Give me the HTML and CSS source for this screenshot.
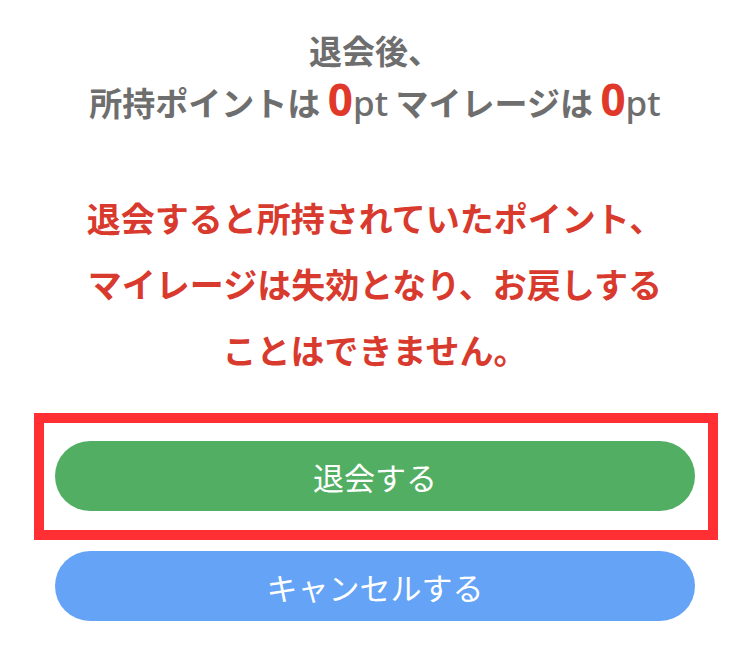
FILE: index.html
```html
<!DOCTYPE html>
<html lang="ja">
<head>
  <meta charset="UTF-8">
  <meta name="viewport" content="width=device-width, initial-scale=1.0">
  <title>退会</title>
  <link rel="stylesheet" href="styles.css">
</head>
<body>
  <div class="container">
    <div class="summary">
      <p>退会後、</p>
      <p>所持ポイントは <span class="num">0</span><span class="unit">pt</span> マイレージは <span class="num">0</span><span class="unit">pt</span></p>
    </div>
    <div class="warning">
      <p>退会すると所持されていたポイント、</p>
      <p>マイレージは失効となり、お戻しする</p>
      <p>ことはできません。</p>
    </div>
    <div class="highlight">
      <button class="btn btn_leave">退会する</button>
    </div>
    <div class="cancel">
      <button class="btn btn_cancel">キャンセルする</button>
    </div>
  </div>
</body>
</html>
```

FILE: styles.css
```css
body {
  margin: 0px;
  background-color: #ffffff;
  font-family: "Noto Sans CJK JP", "Noto Sans", sans-serif;
}
p {
  margin: 0px;
}
.container {
  display: flex;
  flex-direction: column;
}
.summary {
  padding-top: 24px;
  text-align: center;
  color: #6e6e6e;
  font-size: 33px;
  font-weight: bold;
  line-height: 52px;
}
.num {
  font-family: "Noto Sans", sans-serif;
  color: #e0392b;
  font-size: 44px;
  font-weight: bold;
  line-height: 1;
}
.unit {
  font-family: "Noto Sans", sans-serif;
  font-size: 35px;
  font-weight: 500;
  line-height: 1;
}
.warning {
  margin-top: 57px;
  text-align: center;
  color: #d93a2e;
  font-size: 34px;
  font-weight: bold;
  line-height: 66px;
}
.highlight {
  margin: 30px 32px 0px 34px;
  padding: 18px 13px 19px 11px;
  border: 10px solid #ff2f33;
  display: flex;
}
.cancel {
  margin: 11px 55px 0px;
  display: flex;
}
.btn {
  flex: 1;
  height: 70px;
  border: none;
  border-radius: 35px;
  color: #ffffff;
  font-family: "Noto Sans CJK JP", sans-serif;
  font-size: 31px;
  font-weight: 400;
  padding: 0px;
}
.btn_leave {
  background-color: #52ae62;
}
.btn_cancel {
  background-color: #64a3f5;
}
```
